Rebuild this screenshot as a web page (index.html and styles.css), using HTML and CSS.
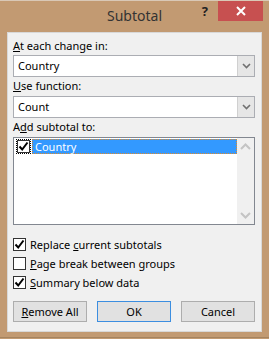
FILE: index.html
```
<html>
<head>
  <title>Subtotal</title>
  <link rel="stylesheet" href="styles.css">
</head>
<body>
<div class="topline"></div>
<div class="titlebar">
  <div></div>
  <div class="title">Subtotal</div>
  <div class="tools">
    <span class="help">?</span>
    <span class="close">
      <svg width="10" height="10" viewBox="0 0 10 10"><path d="M1 1 L9 9 M9 1 L1 9" stroke="#fff" stroke-width="2"/></svg>
    </span>
  </div>
</div>

<div class="panel">
  <div class="label"><u>A</u>t each change in:</div>
  <div class="combo">
    <span class="value">Country</span>
    <span class="drop"><svg width="9" height="6" viewBox="0 0 9 6"><path d="M1 1 L4.5 4.5 L8 1" fill="none" stroke="#707070" stroke-width="1.6"/></svg></span>
  </div>

  <div class="label second"><u>U</u>se function:</div>
  <div class="combo">
    <span class="value">Count</span>
    <span class="drop"><svg width="9" height="6" viewBox="0 0 9 6"><path d="M1 1 L4.5 4.5 L8 1" fill="none" stroke="#707070" stroke-width="1.6"/></svg></span>
  </div>

  <div class="label second">A<u>d</u>d subtotal to:</div>
  <div class="listbox">
    <div class="items">
      <div class="item">
        <span class="box focus"><svg width="11" height="11" viewBox="0 0 11 11"><path d="M1.5 5.5 L4.2 8.5 L9.5 1.5" fill="none" stroke="#000" stroke-width="2"/></svg></span>
        <span class="sel">Country</span>
      </div>
    </div>
    <div class="scroll">
      <svg width="11" height="7" viewBox="0 0 11 7"><path d="M1 6 L5.5 1.5 L10 6" fill="none" stroke="#c4c4c4" stroke-width="2"/></svg>
      <svg width="11" height="7" viewBox="0 0 11 7"><path d="M1 1 L5.5 5.5 L10 1" fill="none" stroke="#c4c4c4" stroke-width="2"/></svg>
    </div>
  </div>

  <div class="checks">
    <div class="check">
      <span class="box"><svg width="11" height="11" viewBox="0 0 11 11"><path d="M1.5 5.5 L4.2 8.5 L9.5 1.5" fill="none" stroke="#000" stroke-width="2"/></svg></span>
      <span>Replace <u>c</u>urrent subtotals</span>
    </div>
    <div class="check">
      <span class="box"></span>
      <span><u>P</u>age break between groups</span>
    </div>
    <div class="check">
      <span class="box"><svg width="11" height="11" viewBox="0 0 11 11"><path d="M1.5 5.5 L4.2 8.5 L9.5 1.5" fill="none" stroke="#000" stroke-width="2"/></svg></span>
      <span><u>S</u>ummary below data</span>
    </div>
  </div>

  <div class="buttons">
    <div class="btn"><u>R</u>emove All</div>
    <div class="btn default">OK</div>
    <div class="btn">Cancel</div>
  </div>
</div>
<div class="bottomline"></div>
</body>
</html>
```

FILE: styles.css
```
body {margin: 0; background: #c29a72; font-family: "Noto Sans", "Open Sans", sans-serif; font-size: 11px; color: #000; width: 269px; height: 339px; overflow: hidden;}

.topline {height: 1px; background: #d9c8b6;}

.titlebar {display: grid; grid-template-columns: 1fr auto 1fr; height: 31px;}
.title {font-size: 14px; color: #333; padding-top: 5px; line-height: 20px;}
.tools {display: flex; justify-content: flex-end; align-items: flex-start; padding-right: 6px;}
.help {font-weight: bold; font-size: 13px; color: #222; margin-right: 10px; line-height: 14px; padding-top: 3px;}
.close {width: 45px; height: 20px; background: #c75050; display: flex; align-items: center; justify-content: center;}

.panel {margin: 0 7px; background: #f0f0f0; border: 1px solid #d8d8d8; padding: 5px 6px 8px 5px; height: 285px;}

.label {line-height: 16px; height: 16px; margin-bottom: 1px;}
.label.second {margin-top: 1px; margin-bottom: 2px;}

.combo {display: flex; height: 20px; border: 1px solid #abadb3; background: #fff;}
.combo .value {flex: 1; padding-left: 4px; line-height: 20px;}
.combo .drop {width: 16px; background: #e6e6e6; border-left: 1px solid #d0d0d0; display: flex; align-items: center; justify-content: center;}

.listbox {display: flex; height: 86px; border: 1px solid #828790; background: #fff; margin-top: 2px;}
.items {flex: 1; padding: 1px 0 0 1px;}
.item {display: flex; align-items: center; height: 15px;}
.item .box {width: 11px; height: 11px; border: 1px solid #333; outline: 1px dotted #000; outline-offset: 0; margin: 0 2px 0 2px; display: flex; align-items: center; justify-content: center;}
.sel {flex: 1; background: #3399ff; color: #fff; line-height: 13px; padding-left: 2px; border: 1px dotted #e08a2a;}
.scroll {width: 17px; background: #f0f0f0; display: flex; flex-direction: column; justify-content: space-between; align-items: center; padding: 5px 0 5px;}

.checks {margin-top: 10px;}
.check {display: flex; align-items: center; height: 19px;}
.check .box {width: 11px; height: 11px; border: 1px solid #333; background: #fff; margin-right: 4px; display: flex; align-items: center; justify-content: center;}

.buttons {display: flex; gap: 10px; margin-top: 9px;}
.btn {width: 72px; height: 19px; border: 1px solid #adadad; background: #e1e1e1; text-align: center; line-height: 19px;}
.btn.default {border-color: #3c8ee0;}
.bottomline {height: 1px; background: #a58460; margin-top: 5px;}
```
